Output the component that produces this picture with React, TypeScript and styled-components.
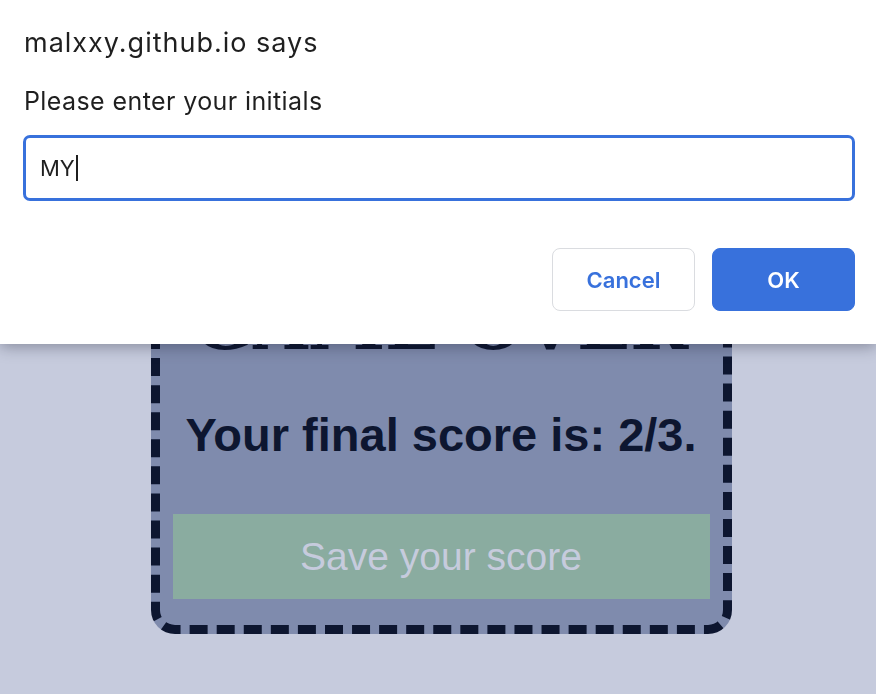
import React from "react";
import styled, { createGlobalStyle } from "styled-components";

const GlobalStyle = createGlobalStyle`
  html, body {
    margin: 0;
    padding: 0;
    background: #c6cbdd;
    height: 100%;
    overflow: hidden;
  }
`;

const App: React.FC = () => {
  return (
    <>
      <GlobalStyle />
      <Page>
        <Card>
          <Title>GAME OVER</Title>
          <Score>Your final score is: 2/3.</Score>
          <SaveButton>Save your score</SaveButton>
        </Card>
      </Page>
      <Dialog>
        <DialogTitle>malxxy.github.io says</DialogTitle>
        <DialogMessage>Please enter your initials</DialogMessage>
        <InputBox>
          <InputText>MY</InputText>
          <Caret />
        </InputBox>
        <ButtonRow>
          <DialogButton>Cancel</DialogButton>
          <DialogButton primary>OK</DialogButton>
        </ButtonRow>
      </Dialog>
    </>
  );
};

export default App;

const Page = styled.div`
  display: flex;
  justify-content: center;
  padding-left: 6px;
  padding-top: 220px;
`;

const Card = styled.div`
  width: 581px;
  box-sizing: border-box;
  display: flex;
  flex-direction: column;
  align-items: stretch;
  background: #7f8bad;
  border: 9px dashed #0d1630;
  border-radius: 24px;
  padding: 56px 13px 26px;
`;

const Title = styled.h1`
  margin: 0;
  text-align: center;
  font-family: "DejaVu Serif", "Liberation Serif", serif;
  font-weight: 700;
  font-size: 70px;
  line-height: 80px;
  white-space: nowrap;
  color: #0d1630;
`;

const Score = styled.p`
  margin: 43px 0 0;
  text-align: center;
  font-family: "Liberation Sans", Arial, sans-serif;
  font-weight: 700;
  font-size: 47px;
  line-height: 54px;
  white-space: nowrap;
  color: #0d1630;
`;

const SaveButton = styled.button`
  margin-top: 52px;
  height: 85px;
  border: none;
  padding: 0;
  background: #8aaca0;
  color: #c6cbdd;
  font-family: "Liberation Sans", Arial, sans-serif;
  font-size: 39px;
`;

const Dialog = styled.div`
  position: fixed;
  top: 0;
  left: 0;
  right: 0;
  height: 344px;
  box-sizing: border-box;
  background: #ffffff;
  padding: 27px 21px 0 23px;
  box-shadow: 0 3px 14px rgba(20, 24, 40, 0.35);
  font-family: Inter, "Noto Sans", sans-serif;
  color: #1f1f1f;
`;

const DialogTitle = styled.div`
  margin-left: 1px;
  font-size: 27px;
  line-height: 32px;
  letter-spacing: 1px;
`;

const DialogMessage = styled.div`
  margin-top: 27px;
  margin-left: 1px;
  font-size: 25px;
  line-height: 30px;
  letter-spacing: 0.4px;
`;

const InputBox = styled.div`
  margin-top: 19px;
  height: 66px;
  box-sizing: border-box;
  border: 3px solid #3871dc;
  border-radius: 7px;
  display: flex;
  align-items: center;
  padding-left: 14px;
`;

const InputText = styled.span`
  font-size: 22px;
  color: #1f1f1f;
`;

const Caret = styled.span`
  width: 2px;
  height: 26px;
  margin-left: 1px;
  background: #1f1f1f;
`;

const ButtonRow = styled.div`
  margin-top: 47px;
  display: flex;
  justify-content: flex-end;
  gap: 17px;
`;

const DialogButton = styled.button<{ primary?: boolean }>`
  width: 143px;
  height: 63px;
  border-radius: 8px;
  border: 1px solid ${(p) => (p.primary ? "#3871dc" : "#dadce0")};
  background: ${(p) => (p.primary ? "#3871dc" : "#ffffff")};
  color: ${(p) => (p.primary ? "#ffffff" : "#3871dc")};
  font-family: Inter, "Noto Sans", sans-serif;
  font-weight: 600;
  font-size: 22px;
`;
